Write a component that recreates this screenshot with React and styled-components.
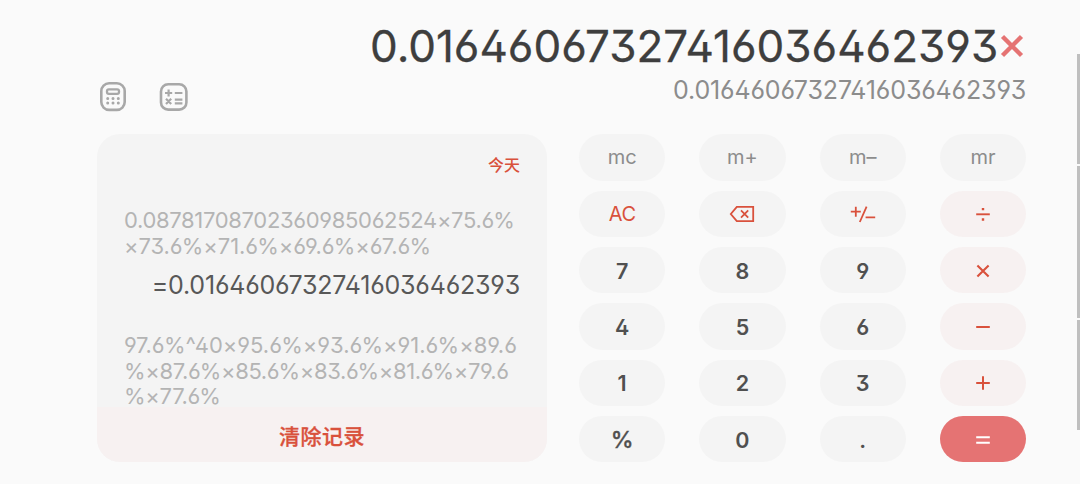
import React from "react";
import styled, { createGlobalStyle, css } from "styled-components";

const GlobalStyle = createGlobalStyle`
  * { box-sizing: border-box; }
  body {
    margin: 0;
    background: #fafafa;
    font-family: Inter, "Noto Sans CJK SC", sans-serif;
    font-feature-settings: "ss01" 1, "cv03" 1, "cv04" 1, "cv09" 0, "calt" 0;
    overflow: hidden;
  }
`;

const Page = styled.div`
  display: flex;
  width: 1080px;
  height: 484px;
`;

const Main = styled.main`
  display: flex;
  flex-direction: column;
  width: 1077px;
  padding: 0 50.8px 21px 97px;
`;

const Header = styled.header`
  display: flex;
  justify-content: space-between;
  align-items: flex-start;
  height: 134.4px;
`;

const Tools = styled.nav`
  display: flex;
  gap: 30px;
  padding: 81px 0 0 2px;
`;

const ToolButton = styled.button`
  display: block;
  width: 30px;
  height: 31px;
  padding: 0;
  border: 0;
  background: none;
`;

const Display = styled.div`
  display: flex;
  flex-direction: column;
  align-items: flex-end;
  padding-top: 20px;
  white-space: nowrap;
`;

const Expression = styled.div`
  display: flex;
  align-items: center;
  height: 53px;
  color: #3e3e3e;
  font-size: 44px;
  font-weight: 400;
  line-height: 53px;
  -webkit-text-stroke: 0.3px #3e3e3e;
`;

const TimesMark = styled.svg`
  display: block;
  width: 28px;
  height: 28px;
  margin-top: -1px;
`;

const Preview = styled.div`
  color: #8c8c8c;
  font-size: 25px;
  line-height: 34px;
  letter-spacing: -0.15px;
`;

const Body = styled.div`
  display: flex;
  justify-content: space-between;
  height: 327.8px;
`;

const History = styled.section`
  display: flex;
  flex-direction: column;
  width: 450px;
  border-radius: 23px;
  background: #f4f4f4;
  overflow: hidden;
`;

const Records = styled.div`
  display: flex;
  flex-direction: column;
  height: 273px;
  padding: 19.6px 27px 0;
  white-space: nowrap;

  > * { flex-shrink: 0; }
`;

const Day = styled.div`
  align-self: flex-end;
  height: 54px;
  color: #d9513c;
  font-size: 16px;
  font-weight: 500;
  line-height: 22px;
`;

const FormulaLine = styled.div`
  color: #b4b4b4;
  font-size: 22px;
  line-height: 25.6px;
  letter-spacing: ${({ $tracking }) => $tracking}px;
`;

const Result = styled.div`
  align-self: flex-end;
  height: 74px;
  padding-top: 10.2px;
  color: #585858;
  font-size: 25px;
  line-height: 32px;
  letter-spacing: -0.2px;
`;

const ClearButton = styled.button`
  flex: 1;
  padding: 0;
  border: 0;
  background: #f7f1f1;
  color: #d9513c;
  font-family: inherit;
  font-size: 21px;
  font-weight: 500;
  letter-spacing: 0.5px;
  -webkit-text-stroke: 0.3px #d9513c;
`;

const Keypad = styled.div`
  display: grid;
  grid-template-columns: repeat(4, 86.4px);
  grid-template-rows: repeat(6, 46.5px);
  gap: 9.8px 33.9px;
`;

const tones = {
  memory: css`color: #8c8c8c; font-size: 20px; padding-bottom: 2px;`,
  action: css`color: #d9513c; font-size: 20px; letter-spacing: -0.5px;`,
  digit: css`color: #505050; font-weight: 600;`,
  percent: css`color: #505050; font-size: 23px; font-weight: 500; -webkit-text-stroke: 0.3px #505050;`,
  operator: css`color: #d9513c; background: #f7f1f1;`,
  equals: css`color: #ffffff; background: #e57373;`,
};

const Key = styled.button`
  display: flex;
  align-items: center;
  justify-content: center;
  padding: 1.1px 0 0;
  border: 0;
  border-radius: 24px;
  background: #f4f4f4;
  font-family: inherit;
  font-feature-settings: inherit;
  font-size: 21.5px;
  ${({ $tone }) => tones[$tone]}
`;

const KeyIcon = styled.svg`
  display: block;
  width: 28px;
  height: 24px;
  fill: none;
  stroke: currentColor;
  stroke-width: 1.8;
`;

const Rail = styled.aside`
  display: flex;
  flex-direction: column;
  gap: 2.5px;
  width: 3px;
  padding-top: 54px;
`;

const RailPart = styled.div`
  height: ${({ $height }) => $height}px;
  background: #bfbfbf;
`;

const glyphs = {
  erase: <><path d="M2.8 12 8.8 4.8H25.2V19.2H8.8Z" /><path d="m13 8.4 7.2 7.2m0-7.2-7.2 7.2" /></>,
  sign: <><path d="M1.8 9.7H11.8M6.8 4.7v10M17.6 4.6 10.8 20M16.6 15.3h9.6" /></>,
  divide: <><path d="M7.2 12.3h13.6" strokeWidth="1.9" /><path d="M14 5.9v2.4M14 16.3v2.4" strokeWidth="2.4" /></>,
  times: <path d="m8.4 6.4 11.2 11.2m0-11.2L8.4 17.6" strokeWidth="2.1" />,
  minus: <path d="M7.2 12h13.6" strokeWidth="2" />,
  plus: <path d="M7.2 12h13.6M14 5.2v13.6" strokeWidth="2" />,
  equals: <path d="M7.2 9.2h13.6M7.2 14.8h13.6" strokeWidth="2" />,
};

const keys = [
  ["mc", "memory"], ["m+", "memory"], ["m–", "memory"], ["mr", "memory"],
  ["AC", "action"], ["erase", "action"], ["sign", "action"], ["divide", "operator"],
  ["7", "digit"], ["8", "digit"], ["9", "digit"], ["times", "operator"],
  ["4", "digit"], ["5", "digit"], ["6", "digit"], ["minus", "operator"],
  ["1", "digit"], ["2", "digit"], ["3", "digit"], ["plus", "operator"],
  ["%", "percent"], ["0", "digit"], [".", "digit"], ["equals", "equals"],
];

const CalculatorIcon = () => (
  <svg width="30" height="31" fill="none" stroke="#a8a8a8">
    <rect x="2.3" y="2.3" width="23.4" height="26.6" rx="7.8" strokeWidth="2.6" />
    <rect x="8" y="8.3" width="12" height="4.6" rx="1.8" strokeWidth="2.3" />
    <path d="M8.7 17.4h.01M14 17.4h.01M19.3 17.4h.01M8.7 22h.01M14 22h.01M19.3 22h.01" strokeWidth="3" strokeLinecap="round" />
  </svg>
);

const ConverterIcon = () => (
  <svg width="30" height="31" fill="none" stroke="#a8a8a8">
    <rect x="2" y="3.2" width="25.4" height="25.4" rx="7.2" strokeWidth="2.6" />
    <path d="M6 12h7.2M9.6 8.4v7.2M15.8 12h7.6M7 17.8l5.2 5.2m0-5.2L7 23M15.8 18.6h7.6M15.8 22.3h7.6" strokeWidth="2.2" />
  </svg>
);

export default function App() {
  return (
    <>
      <GlobalStyle />
      <Page>
        <Main>
          <Header>
            <Tools>
              <ToolButton aria-label="calculator"><CalculatorIcon /></ToolButton>
              <ToolButton aria-label="converter"><ConverterIcon /></ToolButton>
            </Tools>
            <Display>
              <Expression>
                0.01646067327416036462393
                <TimesMark viewBox="0 0 28 28" fill="none" stroke="#e57373" strokeWidth="4.4">
                  <path d="m4.5 4.5 19 19m0-19-19 19" />
                </TimesMark>
              </Expression>
              <Preview>0.01646067327416036462393</Preview>
            </Display>
          </Header>
          <Body>
            <History>
              <Records>
                <Day>今天</Day>
                <FormulaLine $tracking={-0.33}>0.08781708702360985062524×75.6%</FormulaLine>
                <FormulaLine $tracking={-0.08}>×73.6%×71.6%×69.6%×67.6%</FormulaLine>
                <Result>=0.01646067327416036462393</Result>
                <FormulaLine $tracking={-0.03}>97.6%^40×95.6%×93.6%×91.6%×89.6</FormulaLine>
                <FormulaLine $tracking={-0.36}>%×87.6%×85.6%×83.6%×81.6%×79.6</FormulaLine>
                <FormulaLine $tracking={-0.3}>%×77.6%</FormulaLine>
              </Records>
              <ClearButton>清除记录</ClearButton>
            </History>
            <Keypad>
              {keys.map(([name, tone]) => (
                <Key key={name + tone} $tone={tone} aria-label={name}>
                  {glyphs[name] ? <KeyIcon viewBox="0 0 28 24">{glyphs[name]}</KeyIcon> : name}
                </Key>
              ))}
            </Keypad>
          </Body>
        </Main>
        <Rail>
          <RailPart $height={109.5} />
          <RailPart $height={151.5} />
          <RailPart $height={110} />
        </Rail>
      </Page>
    </>
  );
}
